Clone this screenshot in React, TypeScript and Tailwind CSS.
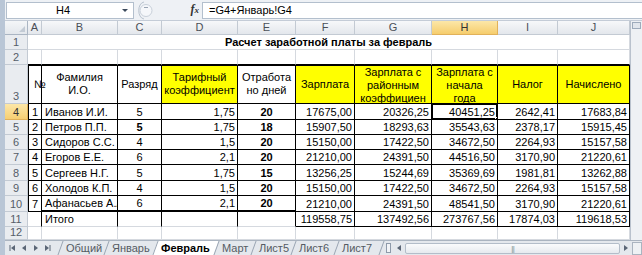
import React from "react";

const DATA: string[][] = [
  ["1", "Иванов И.И.", "5", "1,75", "20", "17675,00", "20326,25", "40451,25", "2642,41", "17683,84"],
  ["2", "Петров П.П.", "5", "1,75", "18", "15907,50", "18293,63", "35543,63", "2378,17", "15915,45"],
  ["3", "Сидоров С.С.", "4", "1,5", "20", "15150,00", "17422,50", "34672,50", "2264,93", "15157,58"],
  ["4", "Егоров Е.Е.", "6", "2,1", "20", "21210,00", "24391,50", "44516,50", "3170,90", "21220,61"],
  ["5", "Сергеев Н.Г.", "5", "1,75", "15", "13256,25", "15244,69", "35369,69", "1981,81", "13262,88"],
  ["6", "Холодов К.П.", "4", "1,5", "20", "15150,00", "17422,50", "34672,50", "2264,93", "15157,58"],
  ["7", "Афанасьев А.А.", "6", "2,1", "20", "21210,00", "24391,50", "48541,50", "3170,90", "21220,61"],
];

const LETTERS = ["A", "B", "C", "D", "E", "F", "G", "H", "I", "J"];

const BASE = "flex overflow-hidden whitespace-nowrap leading-[13px] ";
const GRID = "border-r border-b border-[#d5d9df] ";
const BLK = "border-r border-b border-black ";

function Cell({ cls, children }: { cls: string; children?: React.ReactNode }) {
  return <div className={BASE + cls}>{children}</div>;
}

function RowHdr({ n, sel }: { n: string; sel?: boolean }) {
  return (
    <div
      className={
        "flex items-end justify-center leading-[13px] border-r border-b " +
        (sel
          ? "bg-gradient-to-b from-[#fce7a8] to-[#f7cf72] border-[#e1b15a] text-[#333]"
          : "bg-[#e9ecf0] border-[#c3cad3] text-[#555d68]")
      }
    >
      {n}
    </div>
  );
}

function FormulaBar() {
  return (
    <div className="h-[21px] flex items-center bg-[#eef1f5] border-b border-[#c4ccd7]">
      <div className="ml-[1px] w-[128px] h-[17px] bg-white border border-[#b3bfcd] flex items-center">
        <span className="flex-1 text-center text-[11px] leading-[13px]">H4</span>
        <svg width="12" height="10" viewBox="0 0 12 10" className="mr-[2px]">
          <path d="M3 4 L9 4 L6 7 Z" fill="#3c4a5c" />
        </svg>
      </div>
      <svg width="20" height="19" viewBox="0 0 20 19" className="ml-[1px]">
        <path d="M9 1 C2 2 2 17 9 18" fill="none" stroke="#b9c3cf" strokeWidth="1" />
        <circle cx="11" cy="9.5" r="6" fill="#f5f7fa" stroke="#c8d0da" />
        <rect x="9" y="6" width="4" height="1" fill="#98a4b3" />
      </svg>
      <div className="w-[47px] flex justify-end pr-[3px]">
        <span className="font-['Liberation_Serif',serif] italic font-bold text-[12px] text-[#333] leading-[13px]">
          f<span className="text-[9px]">x</span>
        </span>
      </div>
      <div className="flex-1 h-[17px] bg-white border border-[#b3bfcd] border-r-0 flex items-center pl-[6px] text-[11px] leading-[13px]">
        =G4+Январь!G4
      </div>
    </div>
  );
}

function Sheet() {
  const dataColCls = (c: number, r: number): string => {
    const bold5 = r === 1 && c === 2 ? "font-bold " : "";
    const thickBottom = r === 6 && c >= 1 && c <= 4 ? "border-b-2 " : "";
    const side =
      c === 0
        ? "justify-end pr-[3px] shadow-[inset_1px_0_0_#000] "
        : c === 1
        ? "justify-start pl-[3px] "
        : c === 2
        ? "justify-center "
        : c === 4
        ? "justify-center font-bold "
        : "justify-end pr-[2px] ";
    return "items-end " + BLK + side + bold5 + thickBottom;
  };

  return (
    <div className="grid grid-cols-[23px_14px_76px_44px_76px_58px_59px_77px_66px_60px_72px] grid-rows-[14px_15px_15px_39px_16px_15px_15px_15px_16px_15px_16px_15px_13px] text-[11px]">
      {/* column headers */}
      <div className="relative bg-gradient-to-b from-[#f4f6f8] to-[#e3e7ec] border-r border-b border-[#aab5c3]">
        <svg width="6" height="6" viewBox="0 0 6 6" className="absolute right-[2px] bottom-[2px]">
          <path d="M6 0 L6 6 L0 6 Z" fill="#c3cbd5" />
        </svg>
      </div>
      {LETTERS.map((l) => (
        <div
          key={l}
          className={
            "flex items-center justify-center leading-[13px] border-r border-b " +
            (l === "H"
              ? "bg-gradient-to-b from-[#fce7a8] to-[#f6cd6c] border-[#e1b15a] text-[#333]"
              : "bg-gradient-to-b from-[#f7f8fa] to-[#e3e7ec] border-[#c3cad3] text-[#4a4f57]")
          }
        >
          {l}
        </div>
      ))}

      {/* row 1 */}
      <RowHdr n="1" />
      <Cell cls={"col-span-10 items-end justify-center font-bold border-r border-b border-[#d5d9df]"}>
        Расчет заработной платы за февраль
      </Cell>

      {/* row 2 */}
      <RowHdr n="2" />
      {LETTERS.map((l) => (
        <Cell key={"r2" + l} cls="border-r border-b border-r-[#d5d9df] border-b-black" />
      ))}

      {/* row 3 headers */}
      <RowHdr n="3" />
      <div className={"flex items-center justify-start pl-[6px] leading-[13px] whitespace-nowrap overflow-visible " + BLK + "shadow-[inset_1px_1px_0_#000]"}>
        №
      </div>
      <Cell cls={"flex-col items-center justify-center text-center " + BLK + "shadow-[inset_0_1px_0_#000]"}>
        <span>Фамилия</span>
        <span>И.О.</span>
      </Cell>
      <Cell cls={"items-center justify-center " + BLK + "shadow-[inset_0_1px_0_#000]"}>Разряд</Cell>
      <Cell cls={"flex-col items-center justify-center bg-[#ffff00] " + BLK + "shadow-[inset_0_1px_0_#000]"}>
        <span>Тарифный</span>
        <span>коэффициент</span>
      </Cell>
      <Cell cls={"flex-col items-center justify-center " + BLK + "shadow-[inset_0_1px_0_#000]"}>
        <span>Отработа</span>
        <span>но дней</span>
      </Cell>
      <Cell cls={"items-center justify-center bg-[#ffff00] " + BLK + "shadow-[inset_0_1px_0_#000]"}>Зарплата</Cell>
      <Cell cls={"flex-col items-center justify-start pt-[1px] bg-[#ffff00] " + BLK + "shadow-[inset_0_1px_0_#000]"}>
        <span>Зарплата с</span>
        <span>районным</span>
        <span>коэффициен</span>
      </Cell>
      <Cell cls={"flex-col items-center justify-start pt-[1px] bg-[#ffff00] " + BLK + "shadow-[inset_0_1px_0_#000]"}>
        <span>Зарплата с</span>
        <span>начала</span>
        <span>года</span>
      </Cell>
      <Cell cls={"items-center justify-center bg-[#ffff00] " + BLK + "shadow-[inset_0_1px_0_#000]"}>Налог</Cell>
      <Cell cls={"items-center justify-center bg-[#ffff00] " + BLK + "shadow-[inset_0_1px_0_#000]"}>Начислено</Cell>

      {/* data rows 4-10 */}
      {DATA.map((row, r) => (
        <React.Fragment key={"d" + r}>
          <RowHdr n={String(r + 4)} sel={r === 0} />
          {row.map((v, c) =>
            r === 0 && c === 7 ? (
              <div key={"c" + c} className={BASE + "relative " + dataColCls(c, r)}>
                {v}
                <div className="absolute -left-[1px] -top-[1px] -right-[1px] -bottom-[1px] border-2 border-black z-10 pointer-events-none" />
                <div className="absolute -right-[3px] -bottom-[3px] w-[5px] h-[5px] bg-black border border-white z-20" />
              </div>
            ) : (
              <Cell key={"c" + c} cls={dataColCls(c, r)}>
                {v}
              </Cell>
            )
          )}
        </React.Fragment>
      ))}

      {/* row 11 totals */}
      <RowHdr n="11" />
      <Cell cls="border-r border-b border-r-black border-b-[#d5d9df]" />
      <Cell cls="items-end justify-start pl-[3px] border-r border-b border-r-black border-b-[#d5d9df]">Итого</Cell>
      <Cell cls="border-r border-b border-r-black border-b-[#d5d9df]" />
      <Cell cls="border-r border-b border-r-black border-b-[#d5d9df]" />
      <Cell cls="border-r border-b border-r-black border-b-[#d5d9df]" />
      <Cell cls={"items-end justify-end pr-[2px] " + BLK}>119558,75</Cell>
      <Cell cls={"items-end justify-end pr-[2px] " + BLK}>137492,56</Cell>
      <Cell cls={"items-end justify-end pr-[2px] " + BLK}>273767,56</Cell>
      <Cell cls={"items-end justify-end pr-[2px] " + BLK}>17874,03</Cell>
      <Cell cls={"items-end justify-end pr-[2px] " + BLK}>119618,53</Cell>

      {/* row 12 */}
      <RowHdr n="12" />
      {LETTERS.map((l) => (
        <Cell key={"r12" + l} cls={GRID} />
      ))}
    </div>
  );
}

function VScroll() {
  return (
    <div className="w-[12px] flex flex-col bg-[#eef1f4] border-l border-[#b9c2cd]">
      <div className="h-[7px] mx-[1px] mt-[1px] border border-[#9eabbb] bg-[#e1e6ec]" />
      <div className="flex-1" />
    </div>
  );
}

const TABS: { name: string; w: string; active?: boolean }[] = [
  { name: "Общий", w: "w-[46px]" },
  { name: "Январь", w: "w-[49px]" },
  { name: "Февраль", w: "w-[61px]", active: true },
  { name: "Март", w: "w-[37px]" },
  { name: "Лист5", w: "w-[40px]" },
  { name: "Лист6", w: "w-[43px]" },
  { name: "Лист7", w: "w-[45px]" },
];

function Tri({ dir, bar }: { dir: "l" | "r"; bar?: boolean }) {
  return (
    <svg width="8" height="8" viewBox="0 0 8 8">
      {dir === "l" ? <path d="M6 1 L6 7 L2 4 Z" fill="#5b6676" /> : <path d="M2 1 L2 7 L6 4 Z" fill="#5b6676" />}
      {bar && dir === "l" && <rect x="0.5" y="1" width="1" height="6" fill="#5b6676" />}
      {bar && dir === "r" && <rect x="6.5" y="1" width="1" height="6" fill="#5b6676" />}
    </svg>
  );
}

function TabBar() {
  return (
    <div className="h-[15px] flex items-stretch bg-[#e4e8ed] border-t border-[#aab4c0] text-[11px] leading-[13px]">
      <div className="w-[52px] flex items-center justify-around pl-[2px] pr-[4px]">
        <Tri dir="l" bar />
        <Tri dir="l" />
        <Tri dir="r" />
        <Tri dir="r" bar />
      </div>
      <div className="flex items-stretch">
        {TABS.map((t) => (
          <div key={t.name} className={"relative flex items-center " + t.w}>
            <div
              className={
                "absolute inset-y-0 left-[3px] right-[-3px] -skew-x-[20deg] border-l border-[#9aa5b3] " +
                (t.active ? "bg-white" : "bg-transparent")
              }
            />
            <span className={"relative pl-[9px] " + (t.active ? "font-bold text-black" : "text-[#555b63]")}>{t.name}</span>
          </div>
        ))}
        <div className="relative w-[8px]">
          <div className="absolute inset-y-0 left-[3px] w-[4px] -skew-x-[20deg] border-l border-[#9aa5b3]" />
        </div>
      </div>
      <div className="w-[5px] my-[2px] border border-[#8e9aaa] bg-[#f2f4f7]" />
      <div className="flex-1 flex items-center pl-[4px]">
        <Tri dir="l" />
        <div className="flex-1 h-[11px] mx-[2px] rounded-[2px] border border-[#b3bdc9] bg-gradient-to-b from-[#fafbfc] to-[#e6eaef] flex items-center justify-center">
          <span className="text-[7px] leading-[7px] text-[#8a95a3] tracking-[-1px]">|||</span>
        </div>
        <Tri dir="r" />
        <div className="w-[10px] h-[13px] ml-[2px] border border-[#aab4c0] bg-[#eef1f4]" />
      </div>
    </div>
  );
}

export default function App() {
  return (
    <div className="w-[642px] h-[255px] overflow-hidden bg-white flex font-['Liberation_Sans',Arial,sans-serif] text-[11px] text-black">
      <div className="w-[5px] shrink-0 bg-[#b9c6d6]" />
      <div className="flex-1 flex flex-col min-w-0">
        <FormulaBar />
        <div className="flex h-[219px]">
          <Sheet />
          <VScroll />
        </div>
        <TabBar />
      </div>
    </div>
  );
}
